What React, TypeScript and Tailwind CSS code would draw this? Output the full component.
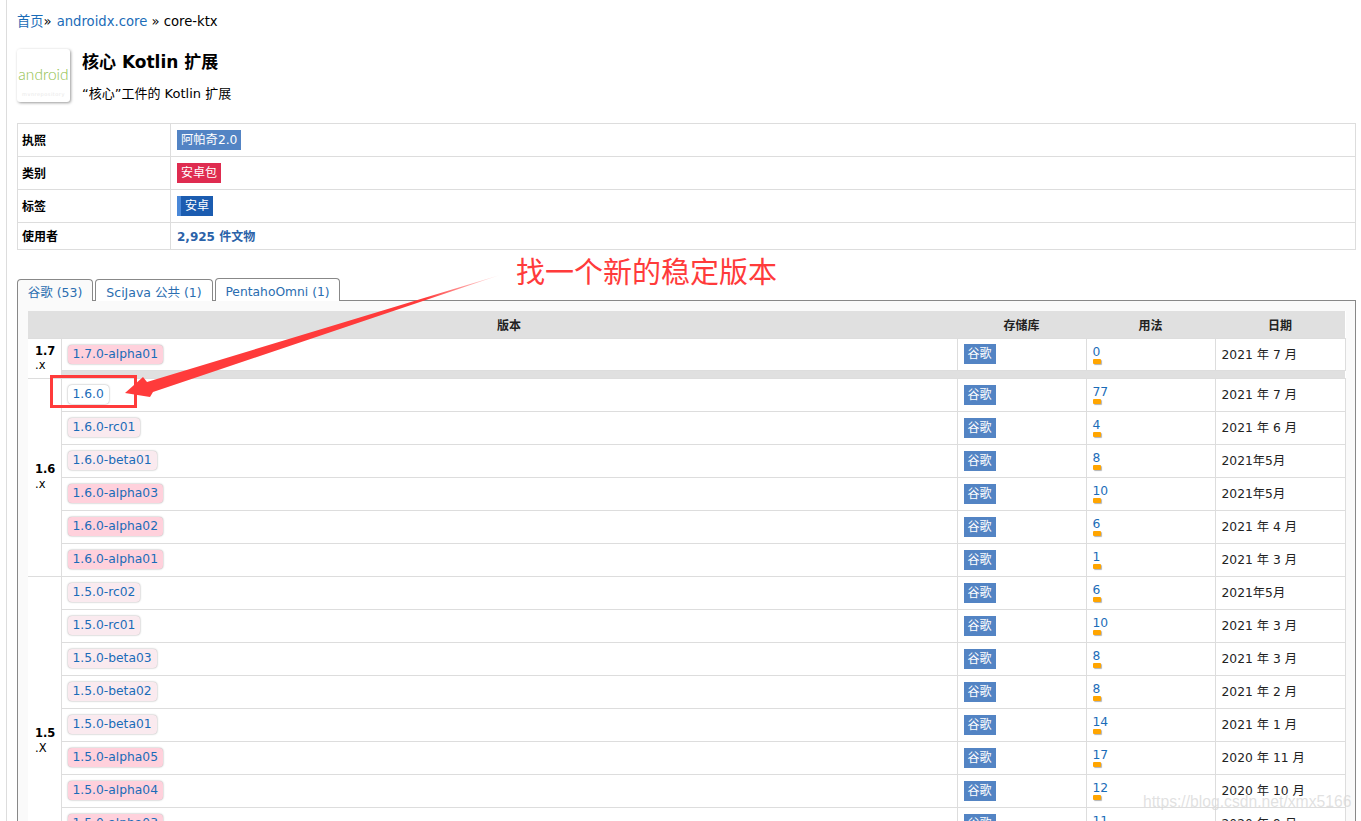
const font = "font-['DejaVu_Sans','Noto_Sans_CJK_SC',sans-serif]";

type Row = { v: string; count: string; date: string };

const groups: { label: string; suffix: string; rows: Row[] }[] = [
  {
    label: "1.6",
    suffix: ".x",
    rows: [
      { v: "1.6.0", count: "77", date: "2021 年 7 月" },
      { v: "1.6.0-rc01", count: "4", date: "2021 年 6 月" },
      { v: "1.6.0-beta01", count: "8", date: "2021年5月" },
      { v: "1.6.0-alpha03", count: "10", date: "2021年5月" },
      { v: "1.6.0-alpha02", count: "6", date: "2021 年 4 月" },
      { v: "1.6.0-alpha01", count: "1", date: "2021 年 3 月" },
    ],
  },
  {
    label: "1.5",
    suffix: ".X",
    rows: [
      { v: "1.5.0-rc02", count: "6", date: "2021年5月" },
      { v: "1.5.0-rc01", count: "10", date: "2021 年 3 月" },
      { v: "1.5.0-beta03", count: "8", date: "2021 年 3 月" },
      { v: "1.5.0-beta02", count: "8", date: "2021 年 2 月" },
      { v: "1.5.0-beta01", count: "14", date: "2021 年 1 月" },
      { v: "1.5.0-alpha05", count: "17", date: "2020 年 11 月" },
      { v: "1.5.0-alpha04", count: "12", date: "2020 年 10 月" },
      { v: "1.5.0-alpha03", count: "11", date: "2020 年 9 月" },
      { v: "1.5.0-alpha02", count: "9", date: "2020 年 8 月" },
      { v: "1.5.0-alpha01", count: "7", date: "2020 年 7 月" },
    ],
  },
];

function VersionBadge({ v }: { v: string }) {
  let bg = "bg-white";
  if (v.includes("alpha")) bg = "bg-[#ffd1dc]";
  else if (v.includes("beta") || v.includes("rc")) bg = "bg-[#faeaef]";
  return (
    <a className={`inline-block rounded-[4px] px-[5px] h-[19px] leading-[18px] text-[12.3px] text-[#1a6cb8] shadow-[0_0_2px_rgba(0,0,0,0.4)] ${bg}`}>
      {v}
    </a>
  );
}

function Cells({ row }: { row: Row }) {
  return (
    <>
      <td className="border border-[#ddd] pl-[6px] align-middle">
        <VersionBadge v={row.v} />
      </td>
      <td className="border border-[#ddd] pl-[6px] align-middle">
        <span className="block w-[32px] h-[20px] leading-[20px] bg-[#5384c4] text-white text-[12px] text-center">谷歌</span>
      </td>
      <td className="border border-[#ddd] pl-[6px] align-top pt-[6px]">
        <a className="block leading-[14px] text-[12.3px] text-[#1a6cb8]">{row.count}</a>
        <div className="w-[8px] h-[5px] rounded-[1px] bg-[#ffa500] shadow-[1px_1px_1px_rgba(0,0,0,0.3)]" />
      </td>
      <td className="border border-[#ddd] pl-[6px] pt-[2px] align-middle text-[12.3px] text-[#222]">{row.date}</td>
    </>
  );
}

export default function App() {
  return (
    <div className={`relative h-[821px] overflow-hidden bg-white text-[13px] text-black ${font}`}>
      <div className="h-full ml-[6px] border-l border-[#ddd] pl-[10px] pr-[5px] pt-[13px]">
        <div className="h-[18px] leading-[18px] text-[13.2px]">
          <a className="text-[#1a6cb8]">首页</a>» <a className="text-[#1a6cb8] ml-[1px]">androidx.core</a> » core-ktx
        </div>

        <div className="flex mt-[18px] h-[55px]">
          <div className="w-[53px] h-[53px] rounded-[3px] bg-white shadow-[1px_1px_3px_rgba(0,0,0,0.4)] flex flex-col items-center">
            <span className="text-[15.5px] leading-[18px] text-[#8fc04a] font-['Lato',sans-serif] font-light mt-[16px]">android</span>
            <span className="text-[5px] leading-[6px] tracking-[0.5px] text-[#e8e8e8] mt-[8px]">mvnrepository</span>
          </div>
          <div className="ml-[12px]">
            <div className="text-[17px] leading-[22px] font-bold mt-[2px]">核心 Kotlin 扩展</div>
            <div className="text-[13px] leading-[18px] mt-[12px]">“核心”工件的 Kotlin 扩展</div>
          </div>
        </div>

        <table className="mt-[19px] w-[1339px] table-fixed border-collapse text-[12px]">
          <colgroup>
            <col className="w-[153px]" />
            <col />
          </colgroup>
          <tbody>
            <tr className="h-[33px]">
              <td className="border border-[#ddd] pl-[4px] pt-[2px] font-bold">执照</td>
              <td className="border border-[#ddd] pl-[6px]">
                <span className="inline-block align-middle h-[20px] leading-[21px] px-[4px] bg-[#5384c4] text-white text-[12.3px]">阿帕奇2.0</span>
              </td>
            </tr>
            <tr className="h-[33px]">
              <td className="border border-[#ddd] pl-[4px] pt-[2px] font-bold">类别</td>
              <td className="border border-[#ddd] pl-[6px]">
                <span className="inline-block align-middle h-[20px] leading-[21px] px-[4px] bg-[#df2c50] text-white text-[12px]">安卓包</span>
              </td>
            </tr>
            <tr className="h-[33px]">
              <td className="border border-[#ddd] pl-[4px] pt-[2px] font-bold">标签</td>
              <td className="border border-[#ddd] pl-[6px]">
                <span className="inline-block align-middle h-[20px] leading-[21px] pl-[4px] pr-[4px] border-l-[4px] border-[#4a88d8] bg-[#1b5cb0] text-white text-[12px]">安卓</span>
              </td>
            </tr>
            <tr className="h-[27px]">
              <td className="border border-[#ddd] pl-[4px] pt-[2px] font-bold">使用者</td>
              <td className="border border-[#ddd] pl-[6px] pt-[2px] font-bold text-[#2a62a8]">2,925 件文物</td>
            </tr>
          </tbody>
        </table>

        <div className="flex items-end gap-[2px] mt-[28px] h-[23px] relative z-10">
          <div className="h-[22px] w-[76px] border border-[#888] border-b-0 rounded-t-[4px] bg-[#fafafa] text-center leading-[26px] text-[12.5px] text-[#2a6db0]">谷歌 (53)</div>
          <div className="h-[22px] w-[118px] border border-[#888] border-b-0 rounded-t-[4px] bg-white text-center leading-[25px] text-[12.5px] text-[#2a6db0]">SciJava 公共 (1)</div>
          <div className="h-[23px] w-[125px] border border-[#888] border-b-0 rounded-t-[4px] bg-white text-center leading-[27px] text-[12.3px] text-[#2a6db0]">PentahoOmni (1)</div>
        </div>

        <div className="-mt-px h-[600px] w-[1339px] border border-[#888] bg-[#fafafa] px-[10px] pt-[10px]">
          <table className="w-[1317px] table-fixed border-collapse bg-white text-[12px]">
            <colgroup>
              <col className="w-[33px]" />
              <col className="w-[896px]" />
              <col className="w-[129px]" />
              <col className="w-[129px]" />
              <col className="w-[130px]" />
            </colgroup>
            <thead>
              <tr className="h-[27px] bg-[#e0e0e0] font-bold text-[#222]">
                <th />
                <th className="text-center pt-[4px]">版本</th>
                <th className="text-center pt-[4px]">存储库</th>
                <th className="text-center pt-[4px]">用法</th>
                <th className="text-center pt-[4px]">日期</th>
              </tr>
            </thead>
            <tbody>
              <tr className="h-[32px]">
                <td rowSpan={2} className="border border-[#ddd] border-l-0 pl-[7px] text-[11.5px] leading-[14px] align-middle">
                  <b>1.7</b>
                  <br />
                  .x
                </td>
                <Cells row={{ v: "1.7.0-alpha01", count: "0", date: "2021 年 7 月" }} />
              </tr>
              <tr className="h-[8px]">
                <td colSpan={4} className="bg-[#e0e0e0]" />
              </tr>
              {groups.map((g) =>
                g.rows.map((row, i) => (
                  <tr key={row.v} className="h-[33px]">
                    {i === 0 && (
                      <td rowSpan={g.rows.length} className="border border-[#ddd] border-l-0 pl-[7px] text-[11.5px] leading-[15px] align-middle">
                        <b>{g.label}</b>
                        <br />
                        {g.suffix}
                      </td>
                    )}
                    <Cells row={row} />
                  </tr>
                ))
              )}
            </tbody>
          </table>
        </div>
      </div>

      {/* annotation drawn over the screenshot */}
      <svg className="absolute left-0 top-0 pointer-events-none" width="1361" height="821">
        <defs>
          <linearGradient id="tail" x1="125" y1="393" x2="500" y2="275" gradientUnits="userSpaceOnUse">
            <stop offset="0.8" stopColor="#ff3b3b" />
            <stop offset="1" stopColor="#ff3b3b" stopOpacity="0.1" />
          </linearGradient>
        </defs>
        <rect x="51.5" y="376.5" width="84" height="30" fill="none" stroke="#ff3b3b" strokeWidth="3" />
        <polygon points="125,393 143,377 147,382 500,275 153,392 150,397" fill="url(#tail)" />
      </svg>
      <div className="absolute left-[516px] top-[248px] text-[29px] leading-[44px] text-[#ff3b3b] font-['Noto_Sans_CJK_SC',sans-serif]">找一个新的稳定版本</div>
      <div className="absolute left-[1143px] top-[792px] text-[15.7px] leading-[20px] text-[rgba(215,215,215,0.75)] font-['Liberation_Sans',sans-serif]">https://blog.csdn.net/xmx5166</div>
    </div>
  );
}
